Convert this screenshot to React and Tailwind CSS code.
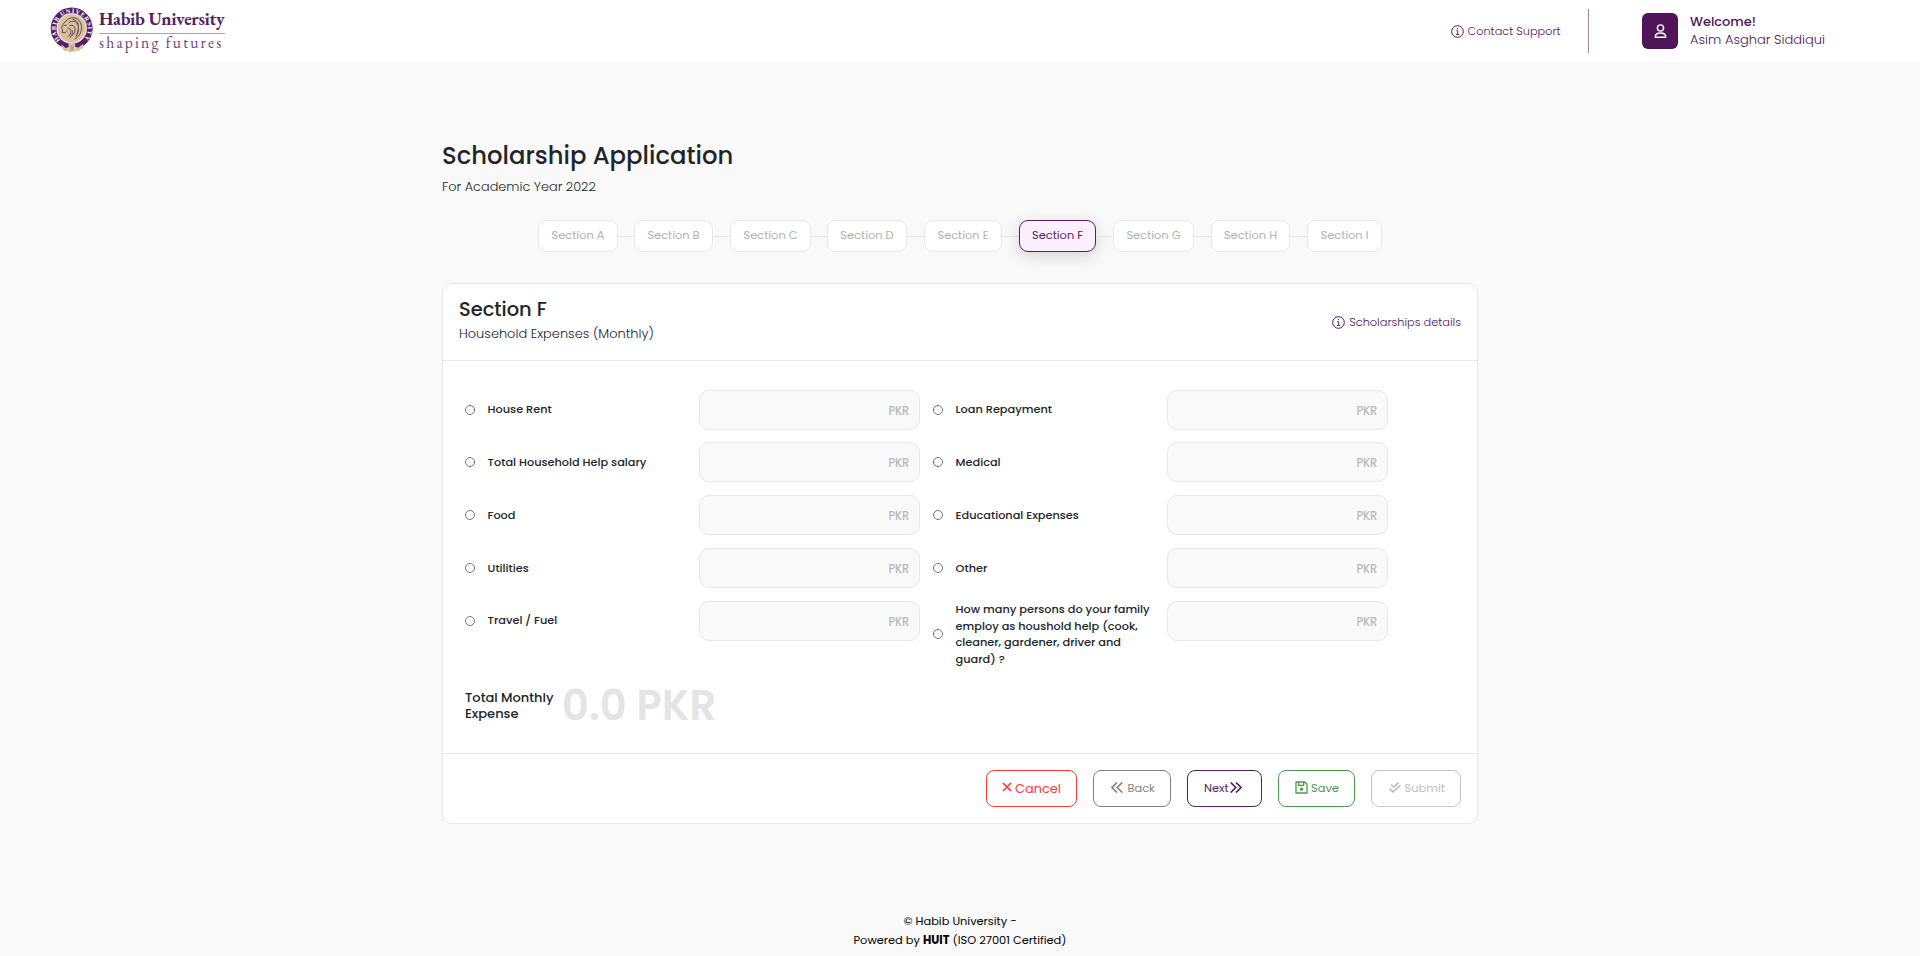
const STEPS = [
  { name: "Section A", width: "w-[80px]" },
  { name: "Section B", width: "w-[79px]", line: "w-4" },
  { name: "Section C", width: "w-[81px]", line: "w-[17px]" },
  { name: "Section D", width: "w-[80px]", line: "w-4" },
  { name: "Section E", width: "w-[78px]", line: "w-[17px]" },
  { name: "Section F", width: "w-[77px]", line: "w-[17px]", active: true },
  { name: "Section G", width: "w-[81px]", line: "w-[17px]" },
  { name: "Section H", width: "w-[79px]", line: "w-[17px]" },
  { name: "Section I", width: "w-[75px]", line: "w-[17px]" },
];

const LEFT = [
  { label: "House Rent", space: "mb-3", nudge: "pb-0.5" },
  { label: "Total Household Help salary", space: "mb-[13px]" },
  { label: "Food", space: "mb-[13px]" },
  { label: "Utilities", space: "mb-[13px]" },
  { label: "Travel / Fuel", nudge: "pb-0.5" },
];

const RIGHT = [
  { label: "Loan Repayment", space: "mb-3", nudge: "pb-0.5" },
  { label: "Medical", space: "mb-[13px]" },
  { label: "Educational Expenses", space: "mb-[13px]" },
  { label: "Other", space: "mb-[13px]" },
  { label: "How many persons do your family employ as houshold help (cook, cleaner, gardener, driver and guard) ?" },
];

function InfoIcon() {
  return (
    <svg className="size-[13px] shrink-0" viewBox="0 0 13 13" fill="none" stroke="currentColor">
      <circle cx="6.5" cy="6.5" r="5.8" strokeWidth="1" />
      <path d="M5.2 5.7h1.5v3.700M4.9 9.5h3.4" strokeWidth="0.9" />
      <circle cx="6.4" cy="3.6" r="0.7" fill="currentColor" stroke="none" />
    </svg>
  );
}

function Seal() {
  return (
    <svg className="h-[48px] w-[46px] shrink-0" viewBox="0 0 46 48">
      <defs>
        <path id="ring" d="M10.4 34.1A16 16 0 1 1 33.2 34.1" />
      </defs>
      <circle cx="21.7" cy="22.5" r="21" fill="#571f66" />
      <circle cx="21.7" cy="22.5" r="15.2" fill="#fff" />
      <circle cx="21.7" cy="22.5" r="14.2" fill="#d8c29c" />
      <text fill="#fff" fontFamily="Liberation Serif, serif" fontSize="6.2" fontWeight="700">
        <textPath href="#ring" textLength="73">HABIB UNIVERSITY</textPath>
      </text>
      <g fill="none" stroke="#5d3350" strokeWidth="0.9" strokeLinecap="round">
        <path d="M16 15c-3 2-3.5 5-4.5 7.5l1.2 1.2-.6 2.8 2 .4c1.6.2 2.4-.9 3-2.2" />
        <path d="M16 15c3-4 9.5-4.5 13-.5 3 3.5 3.3 9 1.2 13-1.2 2.5-3.2 4-5.2 5.5" />
        <path d="M19 16.5c3-2 6.5-1.5 8.3 1.2s1.5 7-.4 10.3" />
        <path d="M20 19.5c2.5-.8 4.6.5 5 2.8.4 2.6-.7 5.2-2.6 7.2" />
        <path d="M18 22c1.8.2 3 1.3 2.9 3.2-.1 2-1.1 3.8-2.7 5.3" />
        <path d="M14.5 19.5l1.8-.3M23 13.5c2.5.6 4.6 2.2 5.5 4.7M28 24c.3 2.3-.5 4.6-2 6.5M22.6 25c0 2.4-1 4.6-2.5 6.5" />
      </g>
      <path d="M11.5 38.5l4 3.5 6-1.5 7 1 4.5-3.5.5 3.5-5 3.5-7 .3-7.5-.3-2.5-4z" fill="#dcc59d" />
      <path d="M19 38l6 .3-.5 4 .8 4.5-3.2-1.5-2.8 2.2-.5-4.5z" fill="#cfaf90" stroke="#fff" strokeWidth="0.5" />
      <path d="M21.2 40.3l1.8 1.5-1.6 1.7" fill="none" stroke="#a4857d" strokeWidth="0.7" />
    </svg>
  );
}

function Expense({ label, space = "", nudge = "" }) {
  return (
    <div className={`flex ${space}`}>
      <div className="flex flex-1 items-center">
        <span className="size-[10px] shrink-0 rounded-full border border-[#767676] bg-white" />
        <span className={`ml-[12.6px] w-[198px] text-[11.3px] leading-[16.7px] font-medium text-[#212529] ${nudge}`}>
          {label}
        </span>
      </div>
      <div className="flex h-10 w-[221px] items-center justify-end rounded-[10px] border border-[#e8e8e8] bg-[#f9f9f9] pr-[10px]">
        <span className="pt-[2px] text-[11.4px] leading-4 font-medium tracking-[-0.2px] text-[#b9b9b9]">PKR</span>
      </div>
    </div>
  );
}

const BUTTON = "flex h-[37px] items-center rounded-lg border bg-white leading-4 whitespace-nowrap";

export default function App() {
  return (
    <div className="h-[956px] overflow-hidden bg-[#f9f9f9] text-[#212529] [font-family:Poppins,Inter,sans-serif]">
      <header className="flex h-[62px] items-center bg-white pl-[50px] text-[#4f1559]">
        <div className="flex items-start self-start pt-[6px]">
          <Seal />
          <div className="ml-[3px] w-[126px] whitespace-nowrap [font-family:'EB_Garamond','Liberation_Serif',serif]">
            <div className="h-7 border-b border-[#b49bbd] pt-px text-[18px] leading-6 font-bold tracking-[-0.33px] text-[#571f66]">
              Habib University
            </div>
            <div className="pt-px text-[15.5px] leading-4 tracking-[2.2px] text-[#6c3d79]">shaping futures</div>
          </div>
        </div>
        <div className="ml-auto flex items-center">
          <div className="flex items-center gap-[3.5px] pt-px">
            <InfoIcon />
            <span className="w-[93.5px] pb-px text-[11.3px] leading-4 font-light whitespace-nowrap">Contact Support</span>
          </div>
          <div className="ml-[27px] h-11 w-px bg-[#a283ab]" />
          <div className="ml-[53px] flex size-9 items-center justify-center rounded-md bg-[#4f1559]">
            <svg className="mb-px h-[14px] w-[13px]" viewBox="0 0 13 14" fill="none" stroke="#fff" strokeWidth="1.4">
              <circle cx="6.5" cy="4" r="3.1" />
              <path d="M1.2 13.2c0-2.9 1.7-4.2 5.3-4.2s5.3 1.3 5.3 4.2z" strokeLinejoin="round" />
            </svg>
          </div>
          <div className="mr-[94px] ml-3 w-[136px] pb-px whitespace-nowrap">
            <div className="text-[12.95px] leading-[18px] font-medium">Welcome!</div>
            <div className="text-[13px] leading-[18px] font-light">Asim Asghar Siddiqui</div>
          </div>
        </div>
      </header>

      <main className="mx-auto w-[1036px] pt-[79px]">
        <h1 className="text-[24.3px] leading-[30px] font-medium">Scholarship Application</h1>
        <p className="mt-[6px] text-[12.85px] leading-5 font-light">For Academic Year 2022</p>

        <nav className="mx-auto mt-[23px] flex w-[844px] items-center">
          {STEPS.map((step) => (
            <div key={step.name} className="flex items-center">
              {step.line && <div className={`h-px bg-[#e8e8e8] ${step.line}`} />}
              <div
                className={`flex h-8 shrink-0 items-center justify-center rounded-[9px] border pb-px text-[11.4px] ${step.width} ${
                  step.active
                    ? "border-[#571f66] bg-[#fceffe] text-[#571f66] shadow-[0_4px_16px_rgba(0,0,0,0.15)]"
                    : "border-[#e8e8e8] bg-white text-[#b1b1b1]"
                }`}
              >
                {step.name}
              </div>
            </div>
          ))}
        </nav>

        <section className="mt-[31px] h-[541px] rounded-[10px] border border-[#e8e8e8] bg-white">
          <div className="flex h-[77px] justify-between border-b border-[#e8e8e8] px-4 pt-[14px]">
            <div>
              <h2 className="text-[19.4px] leading-6 font-medium">Section F</h2>
              <p className="mt-0.5 text-[12.95px] leading-5 font-light">Household Expenses (Monthly)</p>
            </div>
            <div className="mt-[16px] flex h-4 items-center gap-1 text-[#4f1559]">
              <span className="pt-px"><InfoIcon /></span>
              <span className="text-[11.35px] leading-4 font-light">Scholarships details</span>
            </div>
          </div>

          <div className="h-[392px] pt-[29px] pl-[22px]">
            <div className="flex gap-[13px]">
              <div className="w-[455px]">
                {LEFT.map((row) => <Expense key={row.label} {...row} />)}
              </div>
              <div className="w-[455px]">
                {RIGHT.map((row) => <Expense key={row.label} {...row} />)}
              </div>
            </div>
            <div className="mt-[18px] flex h-10 items-center">
              <div className="w-[97px] text-[13px] leading-4 font-medium">Total Monthly Expense</div>
              <div className="text-[41.7px] leading-10 font-semibold text-[#e4e4e4]">0.0 PKR</div>
            </div>
          </div>

          <div className="flex h-[70px] justify-end gap-4 border-t border-[#e8e8e8] pt-4 pr-4 text-[11.4px]">
            <button className={`${BUTTON} w-[91px] border-[#ff3b3b] pl-[15px] text-[12.9px] text-[#ff3b3b]`}>
              <svg className="mr-[3px] mb-[3px] size-[10px]" viewBox="0 0 10 10" fill="none" stroke="currentColor" strokeWidth="1.7">
                <path d="M1 1l8 8M9 1L1 9" />
              </svg>
              Cancel
            </button>
            <button className={`${BUTTON} w-[78px] border-[#828282] pb-px pl-[17px] text-[#828282]`}>
              <svg className="mr-[4.5px] mb-[2px] h-[11px] w-3" viewBox="0 0 12 11" fill="none" stroke="currentColor" strokeWidth="1.7">
                <path d="M6 .5l-5 5 5 5M11.3.5l-5 5 5 5" />
              </svg>
              Back
            </button>
            <button className={`${BUTTON} w-[75px] border-[#571f66] pb-px pl-[16px] text-[#571f66]`}>
              Next
              <svg className="mb-[2px] ml-px h-[11px] w-3" viewBox="0 0 12 11" fill="none" stroke="currentColor" strokeWidth="1.7">
                <path d="M.7.5l5 5-5 5M6 .5l5 5-5 5" />
              </svg>
            </button>
            <button className={`${BUTTON} w-[77px] border-[#4b9a50] pb-px pl-4 text-[#4b9a50]`}>
              <svg className="mr-[3px] mb-[2px] size-[13px]" viewBox="0 0 13 13" fill="none" stroke="currentColor" strokeWidth="1.3">
                <path d="M1 1h8.8L12 3.2V12H1z" strokeLinejoin="round" />
                <path d="M3.7 1v3.3h5V1" />
                <circle cx="6.5" cy="8.2" r="1.6" fill="currentColor" stroke="none" />
              </svg>
              Save
            </button>
            <button className={`${BUTTON} w-[90px] border-[#c4c4c4] pb-px pl-[16.5px] text-[#bdbdbd]`}>
              <svg className="mr-[4px] mb-[2px] h-[11px] w-3" viewBox="0 0 12 11" fill="none" stroke="currentColor" strokeWidth="1.6">
                <path d="M.6 6.600l3.300 3.200L11.500 3M2.200 2.600l2.100 2.100M4.600 5.300L9.400.7" />
              </svg>
              Submit
            </button>
          </div>
        </section>
      </main>

      <footer className="mt-[88px] text-center text-[11.4px] leading-[19px] text-black">
        <div>© Habib University −</div>
        <div>
          Powered by <b className="font-bold">HUIT</b> (ISO 27001 Certified)
        </div>
      </footer>
    </div>
  );
}
